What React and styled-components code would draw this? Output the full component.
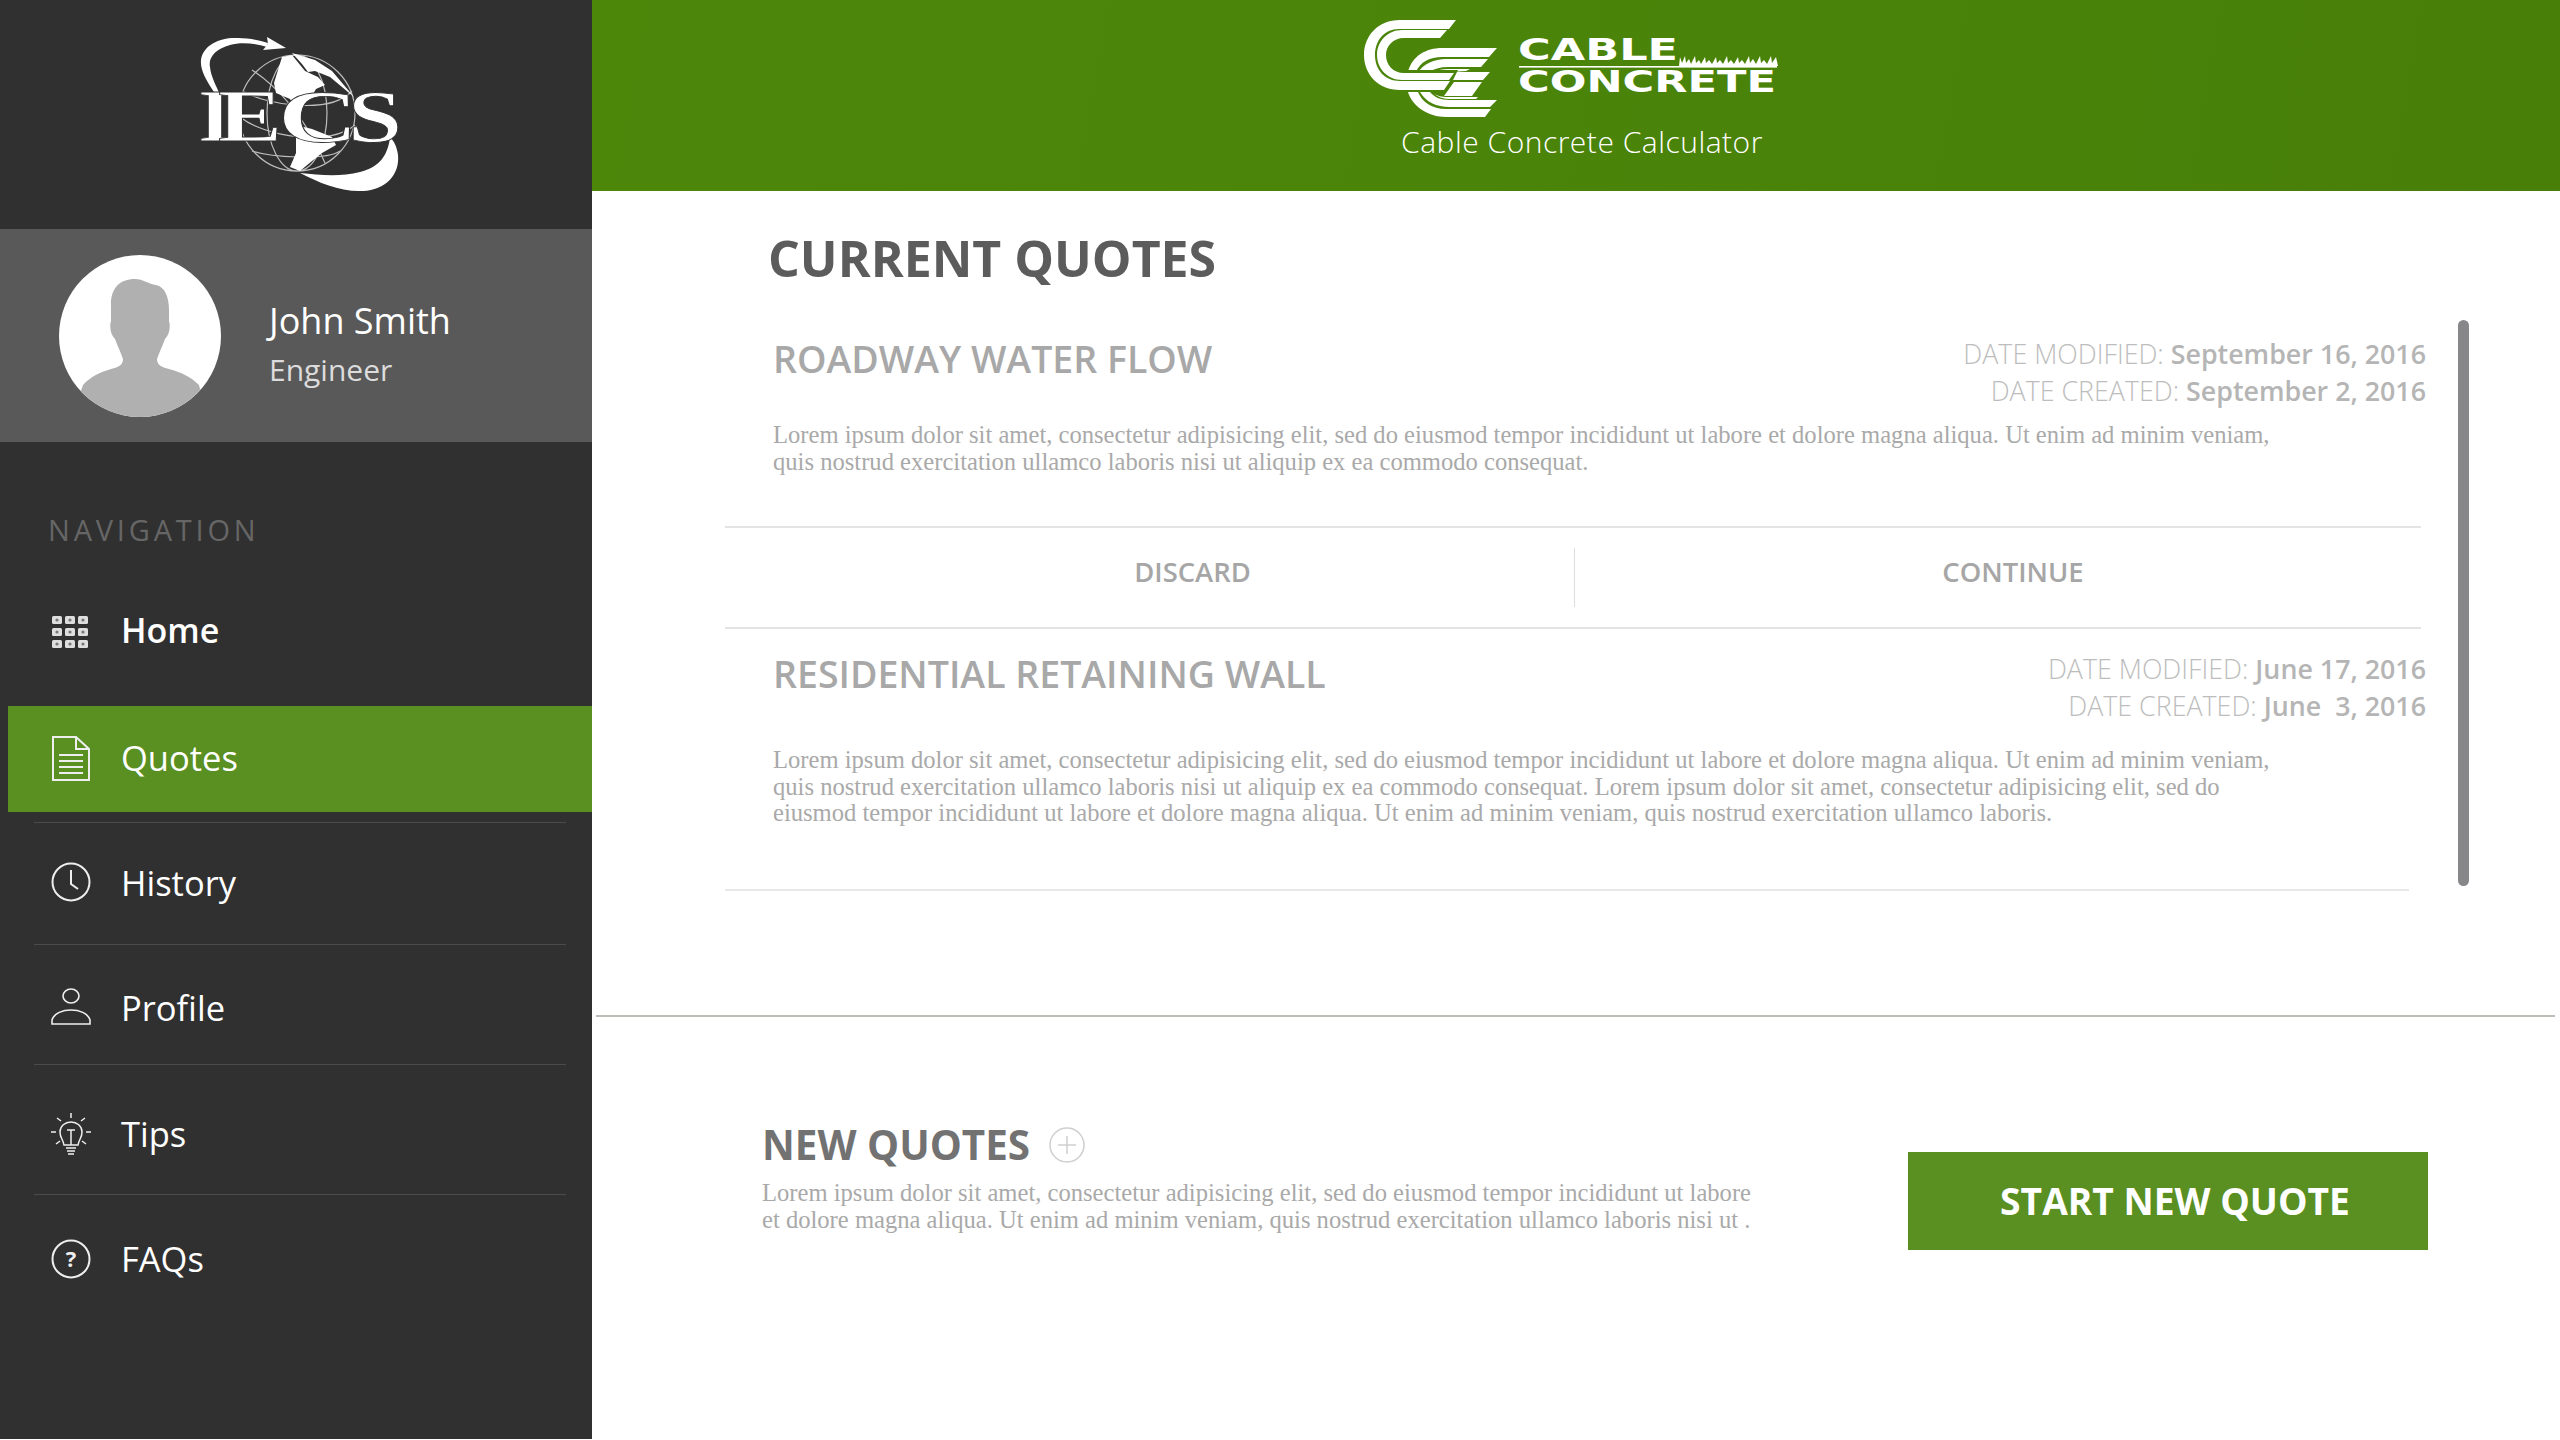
import React from 'react'
import styled, { createGlobalStyle } from 'styled-components'

const GlobalStyle = createGlobalStyle`
  html, body {
    margin: 0;
    padding: 0;
    background: #fff;
  }
  body {
    font-family: "Open Sans", "Liberation Sans", sans-serif;
  }
`

const Page = styled.div`
  width: 2560px;
  height: 1440px;
  display: flex;
  align-items: flex-start;
  overflow: hidden;
`

const Sidebar = styled.aside`
  width: 592px;
  height: 1439px;
  flex: none;
  background: #303030;
  display: flex;
  flex-direction: column;
`

const LogoArea = styled.div`
  height: 229px;
  box-sizing: border-box;
  padding: 25px 0 0 180px;
`

const ProfileBand = styled.div`
  height: 213px;
  flex: none;
  background: #595959;
  display: flex;
  align-items: center;
  padding-left: 59px;
  gap: 48px;
`

const UserInfo = styled.div`
  padding-top: 19px;
`

const UserName = styled.div`
  font-size: 36px;
  line-height: 50px;
  color: #fff;
`

const UserRole = styled.div`
  font-size: 30px;
  line-height: 48px;
  color: #dcdcdc;
`

const NavTitle = styled.div`
  margin: 67px 0 0 48px;
  font-size: 29px;
  line-height: 42px;
  letter-spacing: 3.8px;
  color: #666;
`

const NavList = styled.nav`
  display: flex;
  flex-direction: column;
  padding-top: 39px;
`

const NavRow = styled.div`
  height: ${p => p.$height}px;
  box-sizing: border-box;
  display: flex;
  align-items: center;
  gap: 30px;
  padding-top: ${p => p.$nudge || 0}px;
  padding-bottom: ${p => p.$lift || 0}px;
  margin: ${p => (p.$active ? '36px 0 10px 8px' : '0 26px 0 34px')};
  padding-left: ${p => (p.$active ? 43 : 17)}px;
  background: ${p => (p.$active ? '#5a8f22' : 'transparent')};
  border-top: ${p => (p.$line ? '1px solid #4b4b4b' : 'none')};
  font-size: ${p => (p.$bold ? 34 : 34.5)}px;
  font-weight: ${p => (p.$bold ? 600 : 400)};
  color: #fff;
`

const IconBox = styled.svg`
  width: 40px;
  height: 46px;
  flex: none;
  fill: none;
  stroke: ${p => p.$stroke || '#eee'};
  stroke-width: ${p => p.$weight || 2};
`

const Main = styled.main`
  flex: 1;
  min-width: 0;
  display: flex;
  flex-direction: column;
`

const Header = styled.header`
  height: 191px;
  background: linear-gradient(100deg, #4c870a 0%, #4a8309 60%, #477f09 100%);
  display: flex;
  flex-direction: column;
  align-items: center;
  box-sizing: border-box;
  padding-top: 10px;
`

const BrandMark = styled.svg`
  width: 440px;
  height: 112px;
  flex: none;
  margin-right: 12px;
`

const Subtitle = styled.div`
  font-size: 30px;
  font-weight: 300;
  line-height: 40px;
  letter-spacing: 0.5px;
  color: #fff;
  margin-left: 12px;
`

const QuotesPanel = styled.section`
  position: relative;
  height: 826px;
  box-sizing: border-box;
  margin: 0 5px 0 4px;
  border-bottom: 2px solid #c0bdb8;
`

const PanelTitle = styled.h1`
  margin: 37px 0 0 172px;
  font-size: 50px;
  line-height: 60px;
  font-weight: 700;
  color: #5c5c5c;
`

const Card = styled.article`
  padding: ${p => p.$top}px 129px 0 177px;
`

const CardHead = styled.div`
  display: flex;
  justify-content: space-between;
  align-items: flex-start;
`

const CardTitle = styled.h2`
  margin: 0;
  font-size: 37.5px;
  line-height: 48px;
  font-weight: 600;
  color: #a8a8a8;
`

const Dates = styled.div`
  text-align: right;
  font-size: 26.8px;
  line-height: 37px;
  font-weight: 300;
  color: #bdbdbd;
  white-space: pre;
  b {
    font-weight: 600;
    color: #b5b5b5;
  }
`

const Body = styled.p`
  margin: ${p => p.$top}px 0 0;
  font-family: "Liberation Serif", serif;
  font-size: 24.6px;
  line-height: 26.5px;
  color: #a9a9a9;
  white-space: nowrap;
`

const Actions = styled.div`
  margin: 51px 134px 0 129px;
  height: 103px;
  box-sizing: border-box;
  border-top: 2px solid #e4e4e4;
  border-bottom: 2px solid #e4e4e4;
  display: flex;
  align-items: center;
`

const ActionButton = styled.div`
  width: ${p => p.$width}px;
  box-sizing: border-box;
  flex: none;
  padding: 0 0 12px ${p => p.$shift}px;
  text-align: center;
  font-size: 27.4px;
  font-weight: 600;
  color: #a6a6a6;
`

const ActionSep = styled.div`
  width: 1px;
  height: 59px;
  background: #ddd;
`

const CardEnd = styled.hr`
  margin: 62px 146px 0 129px;
  border: none;
  border-top: 2px solid #e8e8e8;
`

const ScrollThumb = styled.div`
  position: absolute;
  left: 1862px;
  top: 129px;
  width: 11px;
  height: 566px;
  border-radius: 6px;
  background: #87878a;
`

const NewQuotes = styled.section`
  display: flex;
  justify-content: space-between;
  align-items: flex-start;
  padding: 103px 132px 0 170px;
`

const NewTitleRow = styled.div`
  display: flex;
  align-items: center;
  gap: 19px;
`

const NewTitle = styled.h2`
  margin: 0;
  font-size: 40.4px;
  line-height: 50px;
  font-weight: 700;
  color: #727272;
`

const PlusIcon = styled.svg`
  width: 36px;
  height: 36px;
  fill: none;
  stroke: #cfcfcf;
  stroke-width: 1.5;
`

const StartButton = styled.div`
  width: 520px;
  height: 98px;
  box-sizing: border-box;
  margin-top: 32px;
  padding: 0 0 2px 14px;
  background: #5a8f22;
  color: #fff;
  font-size: 37.2px;
  font-weight: 700;
  display: flex;
  align-items: center;
  justify-content: center;
`

function IecsLogo() {
  return (
    <svg width="240" height="180" viewBox="0 0 240 180">
      <g fill="none" stroke="#bdbdbd" strokeWidth="1.2">
        <circle cx="117" cy="88" r="58" />
        <ellipse cx="117" cy="88" rx="30" ry="58" />
        <path d="M63 66 C85 80 150 90 172 66" />
        <path d="M60 92 C85 112 150 122 175 100" />
        <path d="M72 126 C90 132 145 136 160 126" />
        <path d="M72 45 C95 60 125 90 145 138" />
      </g>
      <path fill="#fff" d="M36 70 C26 55 20 45 21 35 C23 20 40 12 58 13 C68 13 78 15 88 18 L87 22 C75 18 60 17 50 20 C36 24 28 32 30 42 C31 52 36 60 40 70 Z" />
      <path fill="#fff" d="M87 12 L106 23 L83 25 L88 19 Z" />
      <path fill="#fff" d="M120 148 C140 158 160 167 183 166 C205 165 220 150 218 130 C217 122 214 116 210 112 C208 130 200 142 180 147 C160 152 140 150 120 148 Z" />
      <path fill="#fff" d="M112 28 L135 35 L152 46 L174 72 L150 52 L135 46 L128 47 L122 39 Z" />
      <path fill="#fff" d="M102 32 L112 30 L125 46 L138 52 L145 60 L136 64 L130 74 L122 72 L116 84 L110 74 L96 68 L94 58 Z" />
      <path fill="#fff" d="M116 100 L132 104 L152 112 L156 120 L142 128 L132 136 L120 146 L110 142 L116 128 Z" />
      <g fontFamily="'Liberation Serif', serif" fontWeight="700" fontSize="74" fill="#fff" stroke="#303030" strokeWidth="0.8">
        <text x="18" y="116" textLength="34" lengthAdjust="spacingAndGlyphs">I</text>
        <text x="38" y="116" textLength="64" lengthAdjust="spacingAndGlyphs">E</text>
        <text x="98" y="117" textLength="80" lengthAdjust="spacingAndGlyphs">C</text>
        <text x="168" y="117" textLength="54" lengthAdjust="spacingAndGlyphs">S</text>
      </g>
    </svg>
  )
}

function CableConcreteLogo() {
  return (
    <BrandMark viewBox="0 0 440 112">
      <g fill="#fff">
        <path d="M147 38 L139 47 L92 47 C80 47 70 52 66 62 L58 62 C62 46 76 38 92 38 Z" />
        <path d="M58 82 C62 96 78 107 96 107 L135 107 L141 99 L96 99 C82 99 72 92 68 82 Z" />
        <path d="M138 49 L131 57 L98 57 C90 57 84 59 78 62 L68 62 C74 54 84 49 96 49 Z" />
        <path d="M70 82 L80 82 C84 87 90 90 100 90 L147 90 L140 97 L100 97 C86 97 76 92 70 82 Z" />
        <path d="M84 62 C88 60 92 59 98 59 L120 59 L116 61 L100 62 Z" />
        <path d="M84 84 C88 86 92 87 96 87 L128 87 L126 89 L100 89 C94 89 88 87 84 84 Z" />
      </g>
      <path d="M40 60 L108 60 L98 82 L40 82 Z" fill="#4a8409" />
      <g fill="#fff">
        <path d="M106 10 L99 19 L49 19 C34 19 25 31 25 45 C25 60 35 71 50 71 L100 71 L94 80 L50 80 C28 80 14 64 14 45 C14 26 28 10 50 10 Z" />
        <path d="M97 20 L90 28 L54 28 C43 28 36 36 36 45 C36 55 43 63 54 63 L104 63 L99 70 L52 70 C38 70 27 59 27 45 C27 31 38 20 52 20 Z" />
        <path d="M107 62 L140 62 L133 70 L103 70 Z" />
        <path d="M104 72 L132 72 L122 86 L94 86 Z" />
      </g>
      <g fontFamily="'DejaVu Sans', sans-serif" fontWeight="700" fontSize="30" fill="#fff">
        <text x="168" y="50" textLength="160" lengthAdjust="spacingAndGlyphs">CABLE</text>
        <text x="168" y="82" textLength="258" lengthAdjust="spacingAndGlyphs">CONCRETE</text>
      </g>
      <rect x="169" y="56" width="258" height="1.6" fill="#fff" />
      <path fill="#fff" d="M329 56 L330 47 L332 53 L335 46 L336 53 L339 49 L341 54 L345 46 L346 53 L349 50 L351 54 L355 47 L356 53 L359 50 L362 54 L366 47 L367 53 L370 50 L373 54 L377 46 L378 53 L381 50 L384 54 L388 47 L389 53 L392 50 L395 54 L399 46 L400 53 L403 49 L406 54 L410 46 L411 53 L414 50 L417 54 L421 46 L422 53 L426 47 L428 56 Z" />
    </BrandMark>
  )
}

function Avatar() {
  return (
    <svg width="162" height="162" viewBox="0 0 162 162">
      <defs>
        <clipPath id="avatar-clip">
          <circle cx="81" cy="81" r="81" />
        </clipPath>
      </defs>
      <circle cx="81" cy="81" r="81" fill="#fff" />
      <path
        clipPath="url(#avatar-clip)"
        fill="#b0b0b0"
        d="M52 52 C51 34 60 24 76 24 C84 24 90 29 97 30 C106 32 110 42 110 55 L110 66 C112 72 110 80 106 84 C103 92 100 98 98 104 C98 110 102 112 110 114 C122 117 132 122 140 130 L150 170 L10 170 L24 130 C32 121 42 117 52 114 C60 112 64 110 64 104 C62 98 59 92 56 84 C52 80 50 72 52 66 Z"
      />
    </svg>
  )
}

const HomeIcon = () => (
  <IconBox viewBox="0 0 40 46" $stroke="none">
    {[9, 21, 33].map(y =>
      [1, 14, 27].map(x => (
        <g key={`${x}-${y}`}>
          <rect x={x} y={y} width="10" height="8" rx="1.5" fill="#dedede" />
          <circle cx={x + 5} cy={y + 4} r="1.6" fill="#777" />
        </g>
      ))
    )}
  </IconBox>
)

const QuotesIcon = () => (
  <IconBox viewBox="0 0 40 46">
    <path d="M2 2 H25 L38 14 V45 H2 Z" />
    <path d="M25 2 V14 H38" />
    <path d="M8 20 H32 M8 26 H32 M8 32 H32 M8 38 H32" />
  </IconBox>
)

const HistoryIcon = () => (
  <IconBox viewBox="0 0 40 46">
    <circle cx="20" cy="23" r="18.5" />
    <path d="M20 11 V25 L27 30" />
  </IconBox>
)

const ProfileIcon = () => (
  <IconBox viewBox="0 0 40 46" $weight={1.6}>
    <ellipse cx="20" cy="11" rx="8" ry="7" />
    <path d="M1 39 V35 C3 28 12 25 20 25 C28 25 37 28 39 35 V39 Z" />
  </IconBox>
)

const TipsIcon = () => (
  <IconBox viewBox="0 0 40 46" $weight={1.5}>
    <path d="M13 34 C12 28 9 27 9 21 C9 15 14 11 20 11 C26 11 31 15 31 21 C31 27 28 28 27 34 Z" />
    <path d="M16 19 H24 M20 19 V34 M15 37 H25 M16 40 H24 M17 43 H23" />
    <path d="M20 2 V7 M6 7 L10 10 M34 7 L30 10 M0 21 H5 M35 21 H40 M5 33 L9 30 M35 33 L31 30" />
  </IconBox>
)

const FaqIcon = () => (
  <IconBox viewBox="0 0 40 46">
    <circle cx="20" cy="23" r="18.5" />
    <text x="20" y="31" textAnchor="middle" fontSize="22" fontWeight="700" fill="#eee" stroke="none" fontFamily="'Open Sans', sans-serif">?</text>
  </IconBox>
)

const navItems = [
  { label: 'Home', Icon: HomeIcon, height: 80, bold: true },
  { label: 'Quotes', Icon: QuotesIcon, height: 106, active: true, lift: 3 },
  { label: 'History', Icon: HistoryIcon, height: 122, line: true, lift: 3 },
  { label: 'Profile', Icon: ProfileIcon, height: 120, line: true, nudge: 6 },
  { label: 'Tips', Icon: TipsIcon, height: 130, line: true, nudge: 8 },
  { label: 'FAQs', Icon: FaqIcon, height: 128, line: true },
]

export default function App() {
  return (
    <Page>
      <GlobalStyle />
      <Sidebar>
        <LogoArea>
          <IecsLogo />
        </LogoArea>
        <ProfileBand>
          <Avatar />
          <UserInfo>
            <UserName>John Smith</UserName>
            <UserRole>Engineer</UserRole>
          </UserInfo>
        </ProfileBand>
        <NavTitle>NAVIGATION</NavTitle>
        <NavList>
          {navItems.map(({ label, Icon, height, bold, active, line, nudge, lift }) => (
            <NavRow key={label} $height={height} $bold={bold} $active={active} $line={line} $nudge={nudge} $lift={lift}>
              <Icon />
              {label}
            </NavRow>
          ))}
        </NavList>
      </Sidebar>
      <Main>
        <Header>
          <CableConcreteLogo />
          <Subtitle>Cable Concrete Calculator</Subtitle>
        </Header>
        <QuotesPanel>
          <PanelTitle>CURRENT QUOTES</PanelTitle>
          <Card $top={47}>
            <CardHead>
              <CardTitle>ROADWAY WATER FLOW</CardTitle>
              <Dates>
                DATE MODIFIED: <b>September 16, 2016</b>
                <br />
                DATE CREATED: <b>September 2, 2016</b>
              </Dates>
            </CardHead>
            <Body $top={13}>
              Lorem ipsum dolor sit amet, consectetur adipisicing elit, sed do eiusmod tempor incididunt ut labore et dolore magna aliqua. Ut enim ad minim veniam,
              <br />
              quis nostrud exercitation ullamco laboris nisi ut aliquip ex ea commodo consequat.
            </Body>
          </Card>
          <Actions>
            <ActionButton $width={849} $shift={86}>DISCARD</ActionButton>
            <ActionSep />
            <ActionButton $width={846} $shift={30}>CONTINUE</ActionButton>
          </Actions>
          <Card $top={21}>
            <CardHead>
              <CardTitle>RESIDENTIAL RETAINING WALL</CardTitle>
              <Dates>
                DATE MODIFIED: <b>June 17, 2016</b>
                <br />
                DATE CREATED: <b>June  3, 2016</b>
              </Dates>
            </CardHead>
            <Body $top={23}>
              Lorem ipsum dolor sit amet, consectetur adipisicing elit, sed do eiusmod tempor incididunt ut labore et dolore magna aliqua. Ut enim ad minim veniam,
              <br />
              quis nostrud exercitation ullamco laboris nisi ut aliquip ex ea commodo consequat. Lorem ipsum dolor sit amet, consectetur adipisicing elit, sed do
              <br />
              eiusmod tempor incididunt ut labore et dolore magna aliqua. Ut enim ad minim veniam, quis nostrud exercitation ullamco laboris.
            </Body>
          </Card>
          <CardEnd />
          <ScrollThumb />
        </QuotesPanel>
        <NewQuotes>
          <div>
            <NewTitleRow>
              <NewTitle>NEW QUOTES</NewTitle>
              <PlusIcon viewBox="0 0 36 36">
                <circle cx="18" cy="18" r="17" />
                <path d="M18 9 V27 M9 18 H27" />
              </PlusIcon>
            </NewTitleRow>
            <Body $top={10}>
              Lorem ipsum dolor sit amet, consectetur adipisicing elit, sed do eiusmod tempor incididunt ut labore
              <br />
              et dolore magna aliqua. Ut enim ad minim veniam, quis nostrud exercitation ullamco laboris nisi ut .
            </Body>
          </div>
          <StartButton>START NEW QUOTE</StartButton>
        </NewQuotes>
      </Main>
    </Page>
  )
}
